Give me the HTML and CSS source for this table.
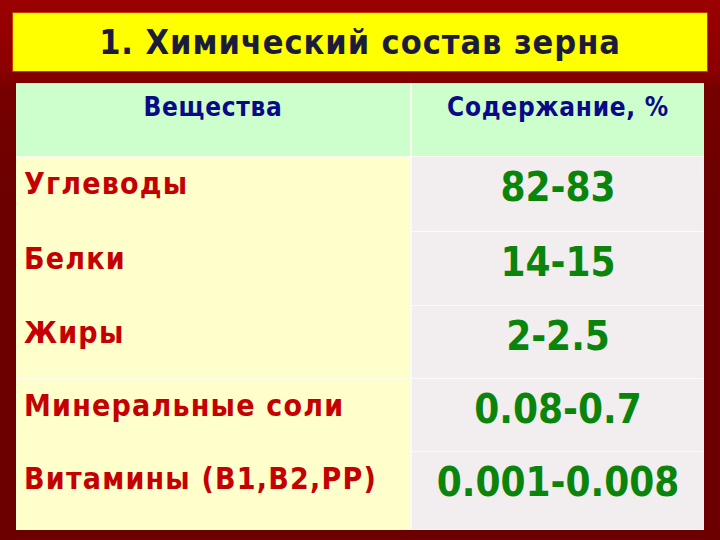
FILE: index.html
```html
<!DOCTYPE html>
<html lang="ru">
<head>
<meta charset="utf-8">
<title>Химический состав зерна</title>
<link rel="stylesheet" href="styles.css">
</head>
<body>
<div class="slide">
  <div class="title-box">
    <h1 class="title">1. Химический состав зерна</h1>
  </div>
  <div class="table">
    <div class="cell head">Вещества</div>
    <div class="cell head">Содержание, %</div>

    <div class="cell name">Углеводы</div>
    <div class="cell value">82-83</div>

    <div class="cell name">Белки</div>
    <div class="cell value">14-15</div>

    <div class="cell name">Жиры</div>
    <div class="cell value">2-2.5</div>

    <div class="cell name">Минеральные соли</div>
    <div class="cell value">0.08-0.7</div>

    <div class="cell name">Витамины (В1,В2,PP)</div>
    <div class="cell value">0.001-0.008</div>
  </div>
</div>
</body>
</html>
```

FILE: styles.css
```css
html, body {
  margin: 0;
  padding: 0;
}

body {
  width: 720px;
  height: 540px;
  overflow: hidden;
  background: linear-gradient(180deg, #9c0000 0px, #8c0000 70px, #760000 90px, #6c0000 200px, #6c0000 540px);
  font-family: "DejaVu Sans Condensed", "DejaVu Sans", sans-serif;
  font-stretch: condensed;
  font-weight: bold;
}

.slide {
  box-sizing: border-box;
  width: 720px;
  height: 540px;
  padding: 12px 12px 0 12px;
}

.title-box {
  box-sizing: border-box;
  height: 60px;
  background: #ffff00;
  border: 1px solid #c83a00;
  display: flex;
  align-items: center;
  justify-content: center;
}

.title {
  margin: 0;
  font-size: 34px;
  line-height: 40px;
  font-weight: bold;
  letter-spacing: 0.95px;
  color: #1b1b3c;
}

.table {
  margin: 11px 4px 0 4px;
  width: 688px;
  height: 447px;
  display: grid;
  grid-template-columns: 394px 292px;
  grid-template-rows: 73px 74px 73px 72px 72px 77px;
  gap: 1px 2px;
  background: #fbfbf4;
}

.cell {
  box-sizing: border-box;
}

.head {
  background: #ccffcc;
  color: #0a0a88;
  font-size: 26px;
  line-height: 30px;
  letter-spacing: 0.7px;
  padding-top: 9px;
  text-align: center;
}

.name {
  background: #ffffcc;
  color: #c40000;
  font-size: 30px;
  line-height: 36px;
  letter-spacing: 1.2px;
  padding: 9px 0 0 8px;
}

.value {
  background: #f2eeef;
  color: #0a840a;
  font-size: 40px;
  line-height: 48px;
  padding-top: 6px;
  text-align: center;
}
```
